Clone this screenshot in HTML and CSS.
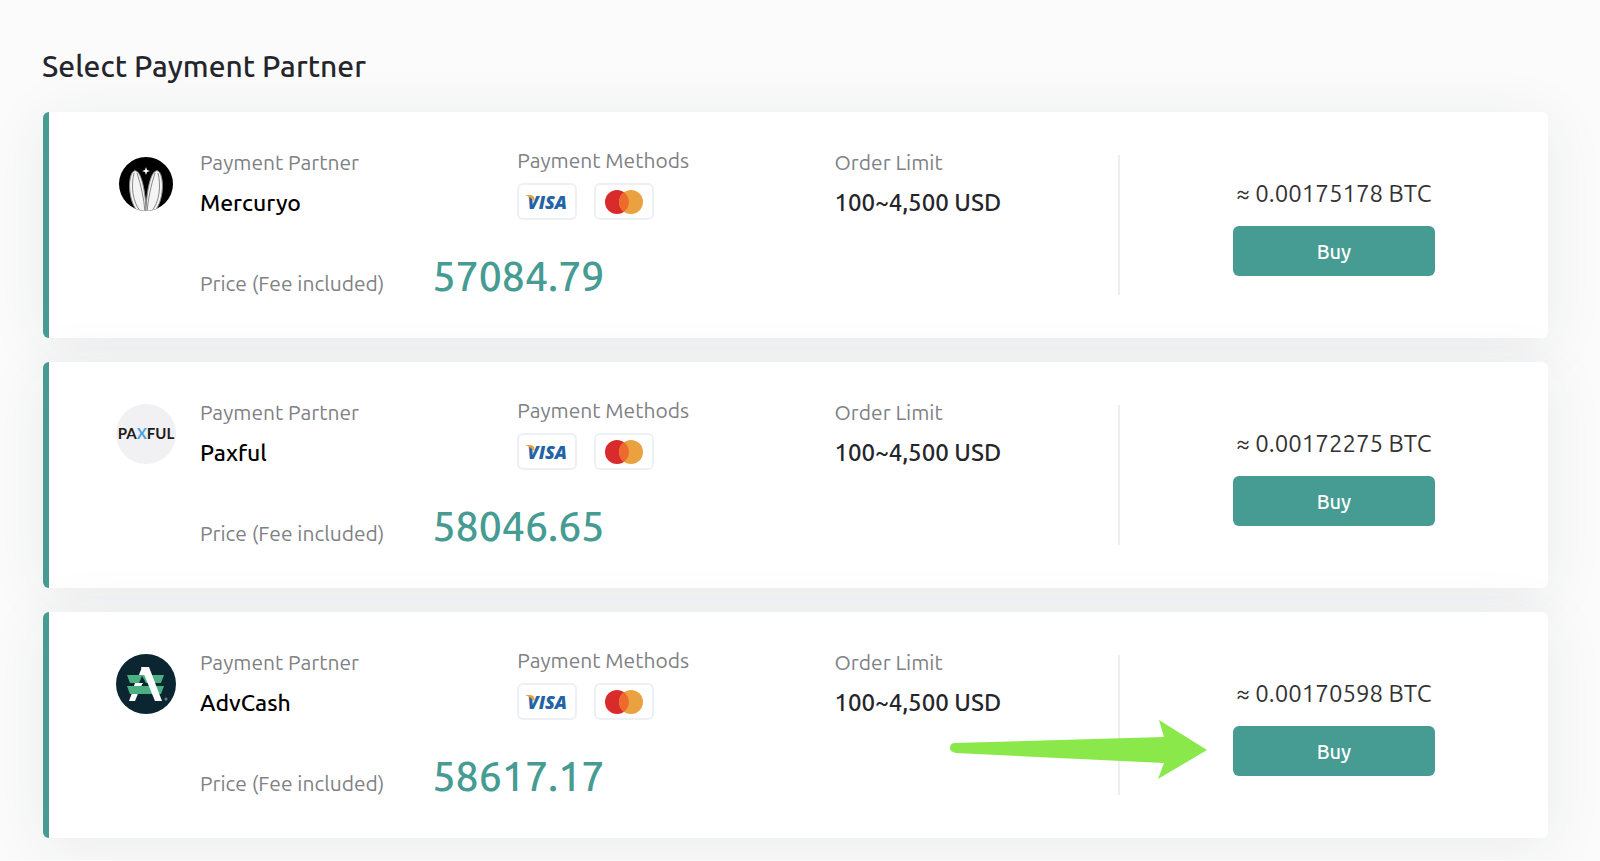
FILE: index.html
```html
<!DOCTYPE html>
<html lang="en">

<head>
    <meta charset="UTF-8">
    <meta name="viewport" content="width=device-width, initial-scale=1.0">
    <title>Select Payment Partner</title>
    <link rel="stylesheet" href="styles.css">
</head>

<body>
    <!-- Shared card logos -->
    <svg class="symbols" aria-hidden="true">
        <symbol id="visa-tip" viewBox="0 0 12 14">
            <path d="M0 1h5q3 0 4 2l1 5Q6 3 0 1z" fill="#e9a23b" />
        </symbol>
        <symbol id="mastercard" viewBox="0 0 38 24">
            <circle cx="12" cy="12" r="12" fill="#d92b2b" />
            <circle cx="26" cy="12" r="12" fill="#eaa13f" />
            <path d="M19 2.3a12 12 0 0 1 0 19.4a12 12 0 0 1 0-19.4z" fill="#ee6a2c" />
        </symbol>
    </svg>

    <main class="partners">
        <h1>Select Payment Partner</h1>

        <section class="card">
            <div class="info">
                <svg class="logo" viewBox="0 0 60 60" role="img" aria-label="Mercuryo">
                    <clipPath id="disc"><circle cx="30" cy="29" r="27" /></clipPath>
                    <circle cx="30" cy="29" r="27" />
                    <g clip-path="url(#disc)" fill="#f4f4f4" stroke="#888" stroke-width="1">
                        <path d="M18 16C12 19 11 45 22 57H30C30 42 26 13 18 16z" />
                        <path d="M18 18C15 30 16 47 25 57M21 18C25 30 28 44 29 57" fill="none" />
                        <path d="M42 16C48 19 49 45 38 57H30C30 42 34 13 42 16z" />
                        <path d="M42 18C45 30 44 47 35 57M39 18C35 30 32 44 31 57" fill="none" />
                    </g>
                    <path d="M30 12l1 3 3 1-3 1-1 3-1-3-3-1 3-1z" fill="#fff" />
                </svg>
                <div class="field">
                    <span class="label">Payment Partner</span>
                    <strong class="name">Mercuryo</strong>
                </div>
                <div class="field methods">
                    <span class="label">Payment Methods</span>
                    <div class="badges">
                        <span class="badge visa">VISA<svg class="visa-tip" aria-hidden="true"><use href="#visa-tip" /></svg></span>
                        <span class="badge"><svg width="38" height="24" role="img" aria-label="Mastercard"><use href="#mastercard" /></svg></span>
                    </div>
                </div>
                <div class="field">
                    <span class="label">Order Limit</span>
                    <strong class="limit">100~4,500 USD</strong>
                </div>
                <div class="price">
                    <span class="label">Price (Fee included)</span>
                    <strong class="amount">57084.79</strong>
                </div>
            </div>
            <div class="order">
                <span class="total">≈ 0.00175178 BTC</span>
                <button type="button" class="buy">Buy</button>
            </div>
        </section>

        <section class="card">
            <div class="info">
                <svg class="logo" viewBox="0 0 60 60" role="img" aria-label="Paxful">
                    <circle cx="30" cy="29" r="30" fill="#f1f1f3" />
                    <text x="30" y="34" class="paxful-text">PA<tspan fill="#4aa3df">X</tspan>FUL</text>
                </svg>
                <div class="field">
                    <span class="label">Payment Partner</span>
                    <strong class="name">Paxful</strong>
                </div>
                <div class="field methods">
                    <span class="label">Payment Methods</span>
                    <div class="badges">
                        <span class="badge visa">VISA<svg class="visa-tip" aria-hidden="true"><use href="#visa-tip" /></svg></span>
                        <span class="badge"><svg width="38" height="24" role="img" aria-label="Mastercard"><use href="#mastercard" /></svg></span>
                    </div>
                </div>
                <div class="field">
                    <span class="label">Order Limit</span>
                    <strong class="limit">100~4,500 USD</strong>
                </div>
                <div class="price">
                    <span class="label">Price (Fee included)</span>
                    <strong class="amount">58046.65</strong>
                </div>
            </div>
            <div class="order">
                <span class="total">≈ 0.00172275 BTC</span>
                <button type="button" class="buy">Buy</button>
            </div>
        </section>

        <section class="card">
            <div class="info">
                <svg class="logo" viewBox="0 1 60 60" role="img" aria-label="AdvCash">
                    <circle cx="30" cy="30" r="30" fill="#0b2631" />
                    <path d="M26 13h7L19 47h-6z" fill="#fff" />
                    <path d="M11 21h37l-3 8H14zM11 32h37l-3 8H14z" fill="#4caf82" />
                    <path d="M23 29l3-7 4 7z" fill="#0b2631" />
                    <path d="M19 29h8l-2 3h-7z" fill="#fff" />
                    <path d="M25 13h8l13 34h-7z" fill="#fff" />
                    <circle cx="50" cy="45" r="1.5" fill="#6f8087" />
                </svg>
                <div class="field">
                    <span class="label">Payment Partner</span>
                    <strong class="name">AdvCash</strong>
                </div>
                <div class="field methods">
                    <span class="label">Payment Methods</span>
                    <div class="badges">
                        <span class="badge visa">VISA<svg class="visa-tip" aria-hidden="true"><use href="#visa-tip" /></svg></span>
                        <span class="badge"><svg width="38" height="24" role="img" aria-label="Mastercard"><use href="#mastercard" /></svg></span>
                    </div>
                </div>
                <div class="field">
                    <span class="label">Order Limit</span>
                    <strong class="limit">100~4,500 USD</strong>
                </div>
                <div class="price">
                    <span class="label">Price (Fee included)</span>
                    <strong class="amount">58617.17</strong>
                </div>
            </div>
            <div class="order">
                <span class="total">≈ 0.00170598 BTC</span>
                <div class="buy-wrap">
                    <button type="button" class="buy">Buy</button>
                    <svg class="arrow" viewBox="0 0 257 60" aria-hidden="true">
                        <path d="M5 23L214 17L209 0L257 30L208 59L214 43L6 33Q0 32 0 28Q0 23 5 23z" fill="#8be84a" />
                    </svg>
                </div>
            </div>
        </section>
    </main>
</body>

</html>
```
FILE: styles.css
```css
* {
    box-sizing: border-box;
}

body {
    font-family: Ubuntu, "Noto Sans", sans-serif;
    background-color: #fbfbfb;
    color: #25262b;
    margin: 0;
}

.symbols {
    display: none;
}

.partners {
    display: flex;
    flex-direction: column;
    gap: 24px;
    padding: 44px 52px 22px 42px;
}

h1 {
    font-size: 30px;
    font-weight: 500;
    line-height: 44px;
    margin: 0;
}

/* Partner card */
.card {
    display: grid;
    grid-template-columns: 5fr 2fr;
    align-items: center;
    min-height: 226px;
    margin-left: 1px;
    background-color: #fff;
    border-left: 6px solid #469b93;
    border-radius: 6px;
    box-shadow: 0 8px 60px rgba(40, 50, 60, 0.08);
}

.info {
    display: grid;
    grid-template-columns: 60px 29fr 29fr 28fr;
    column-gap: 24px;
    row-gap: 32px;
    height: 140px;
    padding-left: 67px;
    border-right: 2px solid #eee;
}

.logo {
    width: 60px;
    height: 60px;
    overflow: visible;
}

.field {
    display: flex;
    flex-direction: column;
    gap: 18px;
}

.methods {
    gap: 16px;
    margin-top: -2px;
}

.label {
    font-size: 21px;
    line-height: 14px;
    color: #808184;
}

.name,
.limit {
    font-size: 24px;
    font-weight: 500;
    line-height: 32px;
}

.name {
    font-size: 23px;
    color: #000;
}

.badges {
    display: flex;
    gap: 17px;
}

.badge {
    display: flex;
    align-items: center;
    justify-content: center;
    width: 60px;
    height: 37px;
    border: 2px solid #edf0f5;
    border-radius: 6px;
}

.visa {
    position: relative;
    font: italic 800 18px "Open Sans", sans-serif;
    color: #2463a5;
}

.visa-tip {
    position: absolute;
    top: 9px;
    left: 6px;
    width: 12px;
    height: 14px;
}

.paxful-text {
    font: 700 15px Lato, sans-serif;
    fill: #1c1c20;
    text-anchor: middle;
}

.price {
    grid-column: 2 / -1;
    display: flex;
    align-items: baseline;
    gap: 48px;
}

.amount {
    font-size: 41px;
    font-weight: 500;
    line-height: 48px;
    color: #469b93;
}

/* Amount and buy button */
.order {
    display: flex;
    flex-direction: column;
    align-items: center;
    gap: 16px;
    padding-top: 4px;
}

.total {
    font-size: 24px;
    line-height: 32px;
    color: #333;
}

.buy-wrap {
    position: relative;
}

.buy {
    display: block;
    width: 202px;
    height: 50px;
    border: 0;
    border-radius: 6px;
    background-color: #469b93;
    color: #fff;
    font-family: inherit;
    font-size: 20px;
    font-weight: 500;
    cursor: pointer;
}

.buy:hover {
    background-color: #3b867f;
}

.arrow {
    position: absolute;
    top: -6px;
    right: 228px;
    width: 257px;
    height: 60px;
}
```
